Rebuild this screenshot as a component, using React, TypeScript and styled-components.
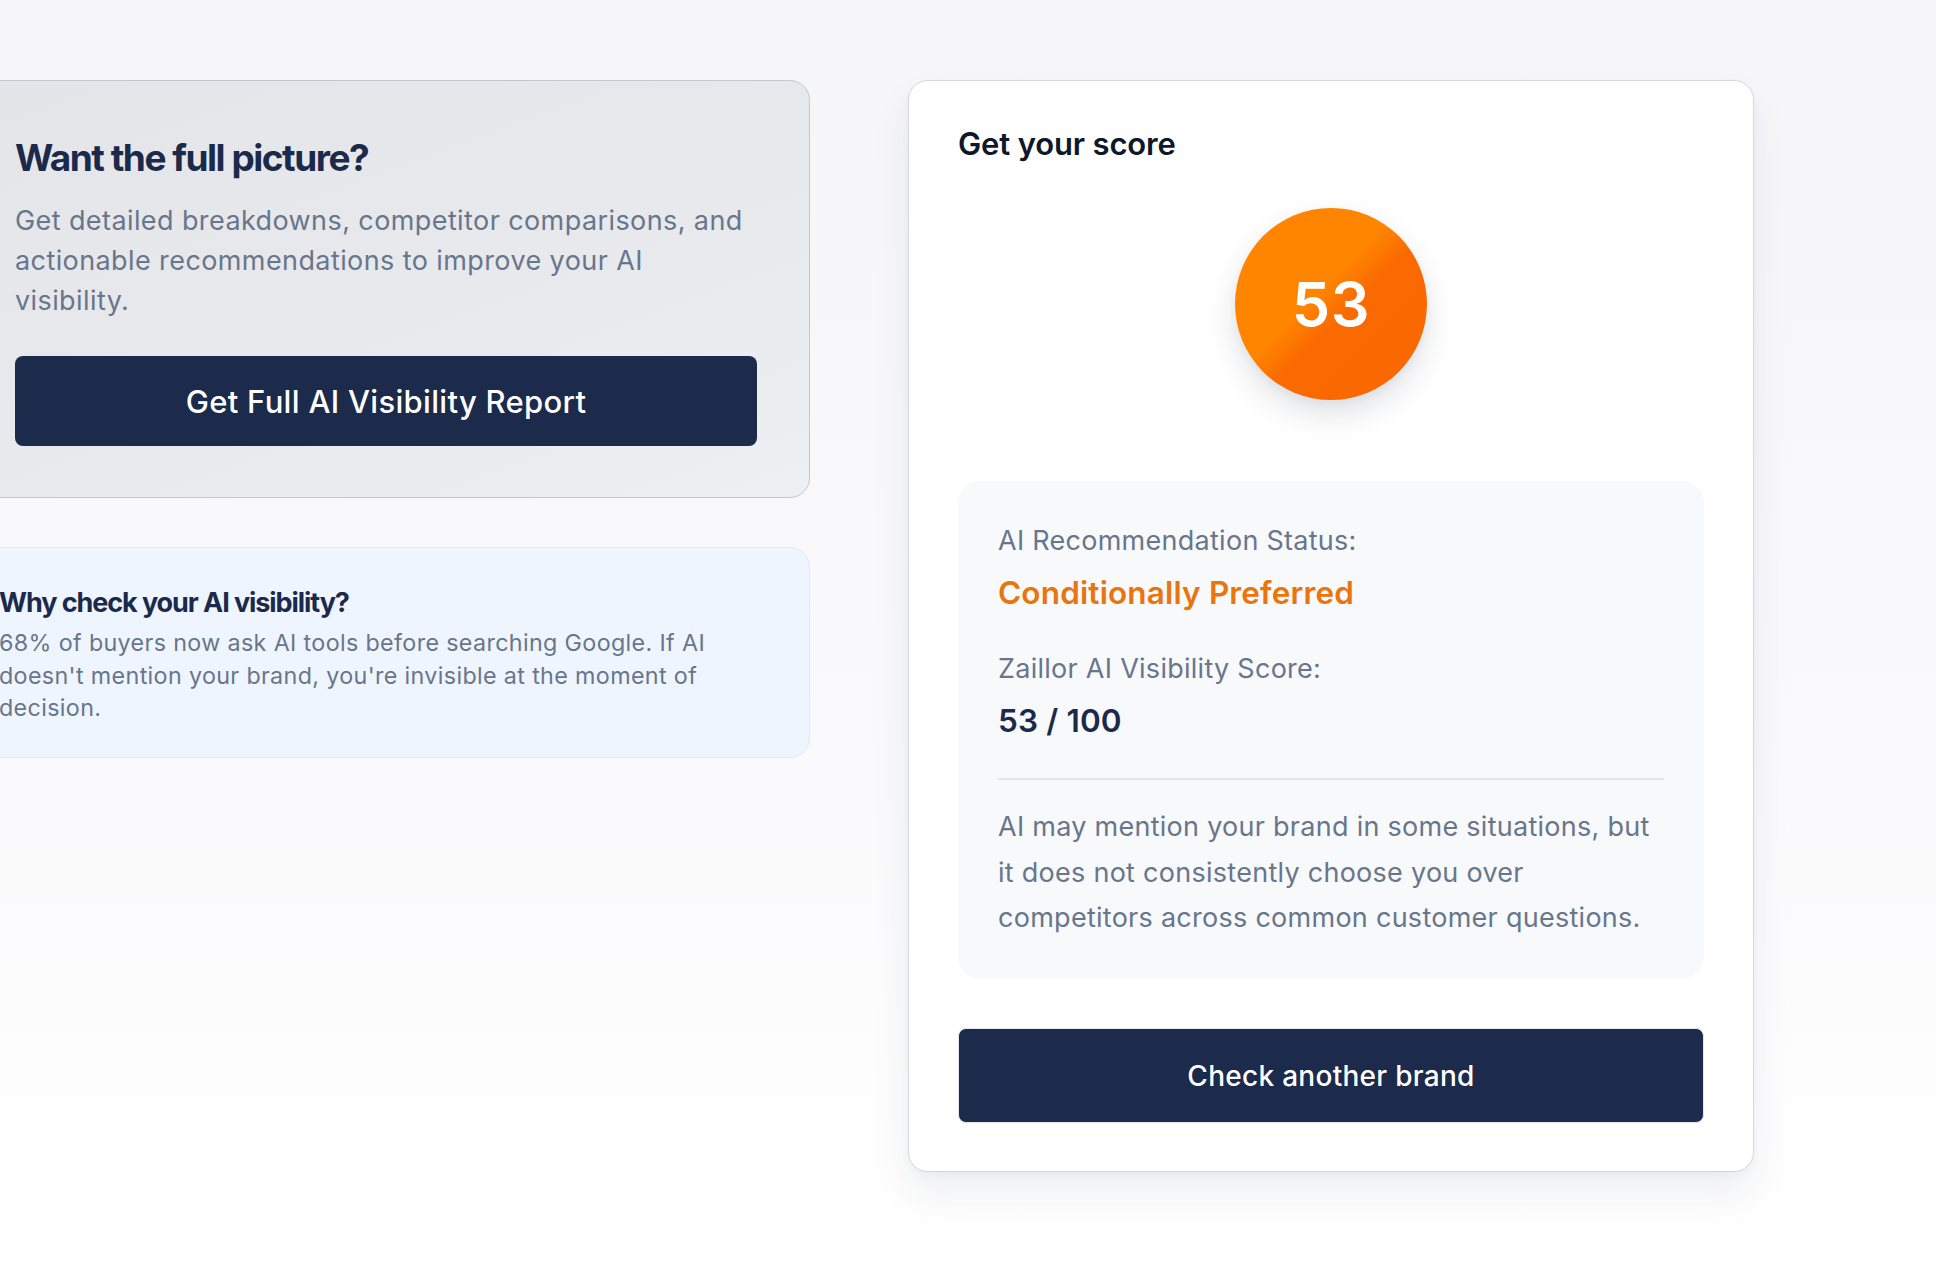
import React from "react";
import styled, { createGlobalStyle } from "styled-components";

const Global = createGlobalStyle`
  html, body { margin: 0; padding: 0; }
  body {
    min-height: 1264px;
    background: linear-gradient(180deg, #f6f6f9 0%, #fafafc 60%, #ffffff 100%);
    font-family: Inter, "Noto Sans", sans-serif;
    overflow: hidden;
  }
  * { box-sizing: border-box; }
`;

const Page = styled.div`
  display: grid;
  grid-template-columns: 844px 846px;
  column-gap: 98px;
  align-items: start;
  padding-top: 80px;
  margin-left: -34px;
  width: 1788px;
`;

const LeftColumn = styled.div`
  display: flex;
  flex-direction: column;
  gap: 49px;
`;

const PromoCard = styled.section`
  height: 418px;
  border: 1.5px solid #c3c7d0;
  border-radius: 20px;
  background: linear-gradient(160deg, #e4e5e9 0%, #e8e9ed 55%, #eeeff2 100%);
  padding: 55px 52px 0 48px;
  display: flex;
  flex-direction: column;
`;

const DisplayHeading = styled.h2<{ $size: number }>`
  margin: 0;
  font-family: Inter, "Noto Sans", sans-serif;
  font-weight: 700;
  font-size: ${(p) => p.$size}px;
  line-height: 1.2;
  letter-spacing: -0.04em;
  color: #1b2a4a;
`;

const PromoText = styled.p`
  margin: 21px 0 0;
  font-size: 27px;
  line-height: 40px;
  letter-spacing: 0.015em;
  color: #68768b;
`;

const DarkButton = styled.button<{ $h: number; $size: number }>`
  display: flex;
  align-items: center;
  justify-content: center;
  width: 100%;
  height: ${(p) => p.$h}px;
  border-radius: 8px;
  background: #1c2a4b;
  color: #ffffff;
  font-family: Inter, "Noto Sans", sans-serif;
  font-weight: 500;
  font-size: ${(p) => p.$size}px;
  letter-spacing: 0.01em;
  cursor: pointer;
`;

const PromoButton = styled(DarkButton)`
  margin-top: 35px;
  border: none;
`;

const InfoCard = styled.section`
  height: 211px;
  border: 1px solid #dfe8f6;
  border-radius: 20px;
  background: #eff5ff;
  padding: 39px 80px 0 32px;
`;

const InfoText = styled.p`
  margin: 8px 0 0;
  font-size: 23.3px;
  line-height: 32.5px;
  letter-spacing: 0.015em;
  color: #69758a;
`;

const ScoreCard = styled.section`
  height: 1092px;
  background: #ffffff;
  border: 1.5px solid #d4d7de;
  border-radius: 20px;
  box-shadow: 0 22px 40px rgba(30, 41, 70, 0.07), 0 4px 10px rgba(30, 41, 70, 0.03);
  padding: 46px 49px 0 49px;
  display: flex;
  flex-direction: column;
`;

const CardTitle = styled.h2`
  margin: 0;
  font-weight: 600;
  font-size: 31px;
  line-height: 34px;
  letter-spacing: -0.005em;
  color: #0f172a;
`;

const ScoreWrap = styled.div`
  display: flex;
  justify-content: center;
  margin-top: 47px;
`;

const ScoreCircle = styled.div`
  width: 192px;
  height: 192px;
  border-radius: 50%;
  background: linear-gradient(135deg, #ff8600 0%, #ff8400 44%, #fa6a00 56%, #f96800 100%);
  box-shadow: 0 14px 30px rgba(40, 50, 80, 0.14), 0 3px 8px rgba(40, 50, 80, 0.05);
  display: flex;
  align-items: center;
  justify-content: center;
  color: #ffffff;
  font-weight: 600;
  font-size: 61px;
  letter-spacing: 0.01em;
`;

const Panel = styled.div`
  margin-top: 81px;
  height: 498px;
  border-radius: 22px;
  background: #f8f9fb;
  padding: 43px 40px 0 40px;
  display: flex;
  flex-direction: column;
`;

const Label = styled.div<{ $gap?: number }>`
  margin-top: ${(p) => p.$gap ?? 0}px;
  font-size: 27px;
  line-height: 34px;
  letter-spacing: 0.01em;
  color: #68768b;
`;

const Value = styled.div<{ $accent?: boolean }>`
  margin-top: 18px;
  font-weight: 600;
  font-size: 31.5px;
  line-height: 34px;
  letter-spacing: 0.005em;
  color: ${(p) => (p.$accent ? "#ea740e" : "#1b2a4a")};
`;

const Divider = styled.hr`
  margin: 40px 0 0;
  border: none;
  border-top: 2px solid #e3e6eb;
  width: 666px;
`;

const PanelText = styled.p`
  margin: 24px 0 0;
  font-size: 27px;
  line-height: 45.5px;
  letter-spacing: 0.01em;
  color: #68768b;
`;

const AnotherButton = styled(DarkButton)`
  margin-top: 49px;
  border: 1.5px solid #e4e6ec;
`;

export default function App() {
  return (
    <>
      <Global />
      <Page>
        <LeftColumn>
          <PromoCard>
            <DisplayHeading $size={37}>Want the full picture?</DisplayHeading>
            <PromoText>
              Get detailed breakdowns, competitor comparisons, and actionable
              recommendations to improve your AI visibility.
            </PromoText>
            <PromoButton $h={90} $size={31}>Get Full AI Visibility Report</PromoButton>
          </PromoCard>
          <InfoCard>
            <DisplayHeading $size={27}>Why check your AI visibility?</DisplayHeading>
            <InfoText>
              68% of buyers now ask AI tools before searching Google. If AI
              doesn't mention your brand, you're invisible at the moment of
              decision.
            </InfoText>
          </InfoCard>
        </LeftColumn>
        <ScoreCard>
          <CardTitle>Get your score</CardTitle>
          <ScoreWrap>
            <ScoreCircle>53</ScoreCircle>
          </ScoreWrap>
          <Panel>
            <Label>AI Recommendation Status:</Label>
            <Value $accent>Conditionally Preferred</Value>
            <Label $gap={42}>Zaillor AI Visibility Score:</Label>
            <Value>53 / 100</Value>
            <Divider />
            <PanelText>
              AI may mention your brand in some situations, but it does not
              consistently choose you over competitors across common customer
              questions.
            </PanelText>
          </Panel>
          <AnotherButton $h={95} $size={28}>Check another brand</AnotherButton>
        </ScoreCard>
      </Page>
    </>
  );
}
